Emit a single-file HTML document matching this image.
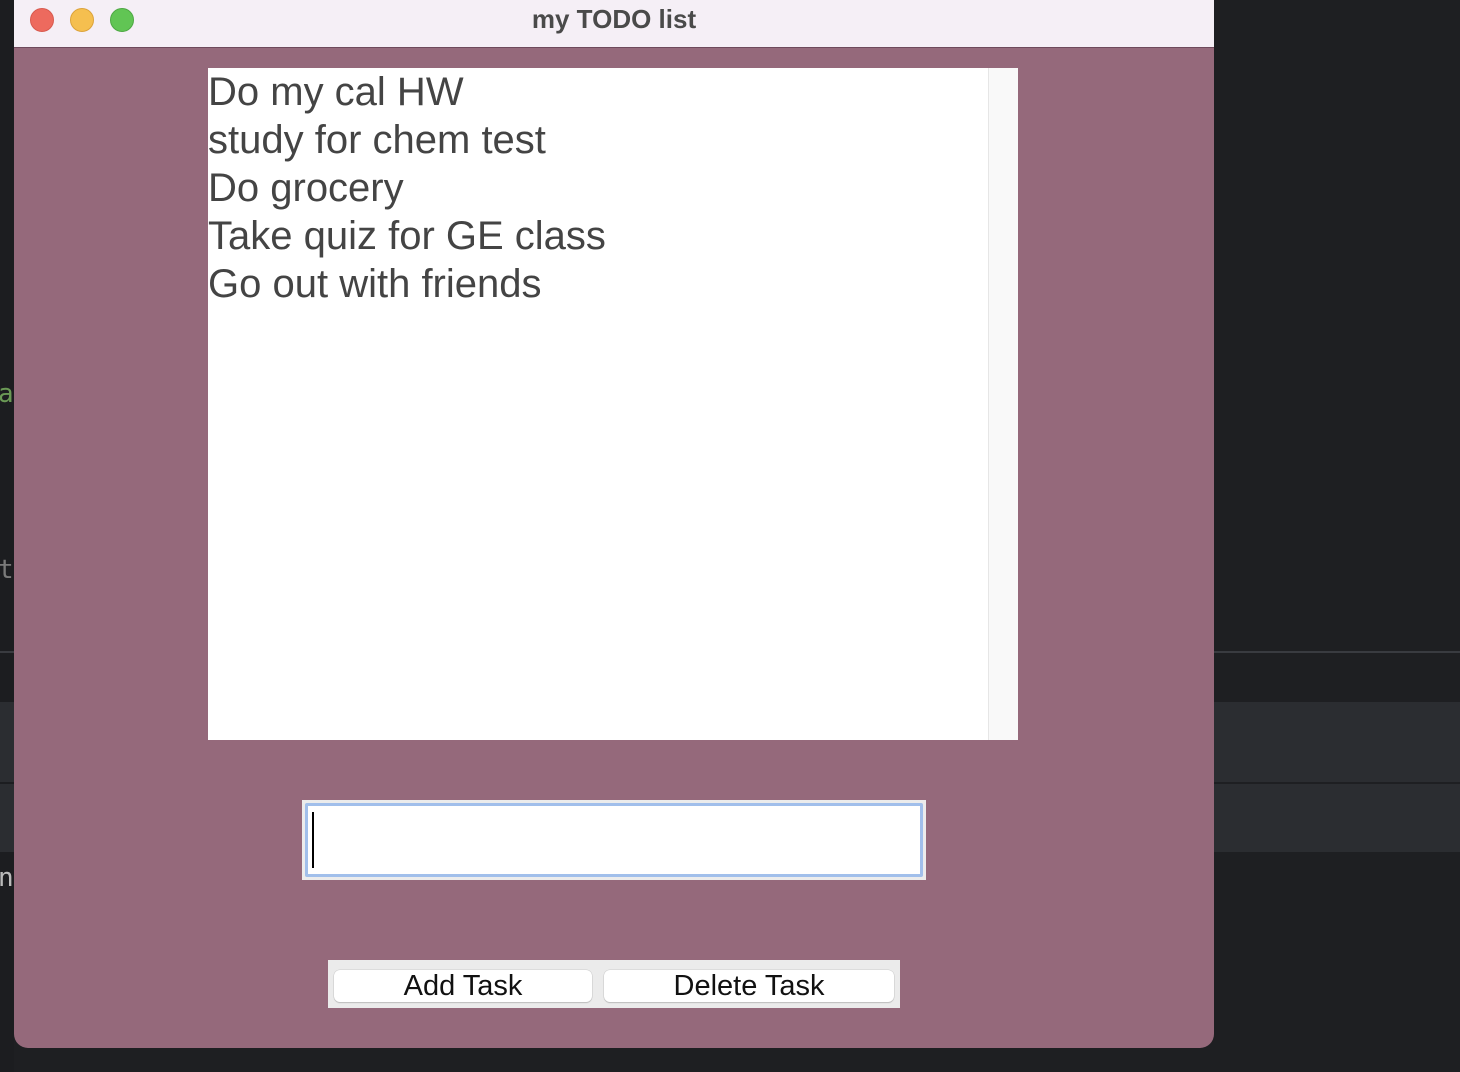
<!DOCTYPE html>
<html><head><meta charset="utf-8"><style>
*{margin:0;padding:0;box-sizing:border-box}
body{width:1460px;height:1072px;background:#1e1f22;position:relative;overflow:hidden;font-family:"Liberation Sans",sans-serif}
.abs{position:absolute}
</style></head><body>
<div class="abs" style="left:0;top:0;width:14px;height:1072px;background:#1c1d20"></div>
<div class="abs" style="left:-2px;top:379px;font:26px 'DejaVu Sans Mono',monospace;color:#6a9955">a</div>
<div class="abs" style="left:-2px;top:555px;font:26px 'DejaVu Sans Mono',monospace;color:#7a7a7a">t</div>
<div class="abs" style="left:-2px;top:863px;font:26px 'DejaVu Sans Mono',monospace;color:#bbb">n</div>
<div class="abs" style="left:0;top:651px;width:1460px;height:2px;background:#393b40"></div>
<div class="abs" style="left:0;top:702px;width:1460px;height:80px;background:#2b2d31"></div>
<div class="abs" style="left:0;top:784px;width:1460px;height:68px;background:#2b2d31"></div>
<div class="abs" style="left:14px;top:0;width:1200px;height:1048px;background:#95697b;border-radius:0 0 14px 14px;overflow:hidden">
 <div class="abs" style="left:0;top:0;width:1200px;height:48px;background:#f5eff6;border-bottom:1px solid #6e4a5c"></div>
 <div class="abs" style="left:16px;top:8px;width:24px;height:24px;border-radius:50%;background:#ed6a5e;border:1px solid #d85a4f"></div>
 <div class="abs" style="left:56px;top:8px;width:24px;height:24px;border-radius:50%;background:#f5bf4f;border:1px solid #dca33a"></div>
 <div class="abs" style="left:96px;top:8px;width:24px;height:24px;border-radius:50%;background:#61c554;border:1px solid #4ea844"></div>
 <div class="abs" style="left:0;top:4px;width:1200px;text-align:center;font-weight:bold;font-size:26px;color:#4a4a4a">my TODO list</div>
 <div class="abs" style="left:194px;top:68px;width:810px;height:672px;background:#fff">
  <div class="abs" style="left:780px;top:0;width:30px;height:672px;background:#f9f9f9;border-left:1px solid #e6e6e6"></div>
  <div class="abs" style="left:0;top:0;font-size:40px;line-height:48px;color:#444">Do my cal HW<br>study for chem test<br>Do grocery<br>Take quiz for GE class<br>Go out with friends</div>
 </div>
 <div class="abs" style="left:288px;top:800px;width:624px;height:80px;background:#ececec"></div>
 <div class="abs" style="left:291px;top:803px;width:618px;height:74px;background:#fff;border:3px solid #a1bfeb;border-radius:2px"></div>
 <div class="abs" style="left:298px;top:812px;width:2px;height:56px;background:#000"></div>
 <div class="abs" style="left:314px;top:960px;width:572px;height:48px;background:#ebebeb"></div>
 <div class="abs" style="left:320px;top:970px;width:258px;height:32px;background:#fff;border-radius:6px;box-shadow:0 1px 1px #bbb,0 0 0 .5px #ccc;text-align:center;font-size:29px;line-height:33px;color:#111">Add Task</div>
 <div class="abs" style="left:590px;top:970px;width:290px;height:32px;background:#fff;border-radius:6px;box-shadow:0 1px 1px #bbb,0 0 0 .5px #ccc;text-align:center;font-size:29px;line-height:33px;color:#111">Delete Task</div>
</div>
</body></html>
